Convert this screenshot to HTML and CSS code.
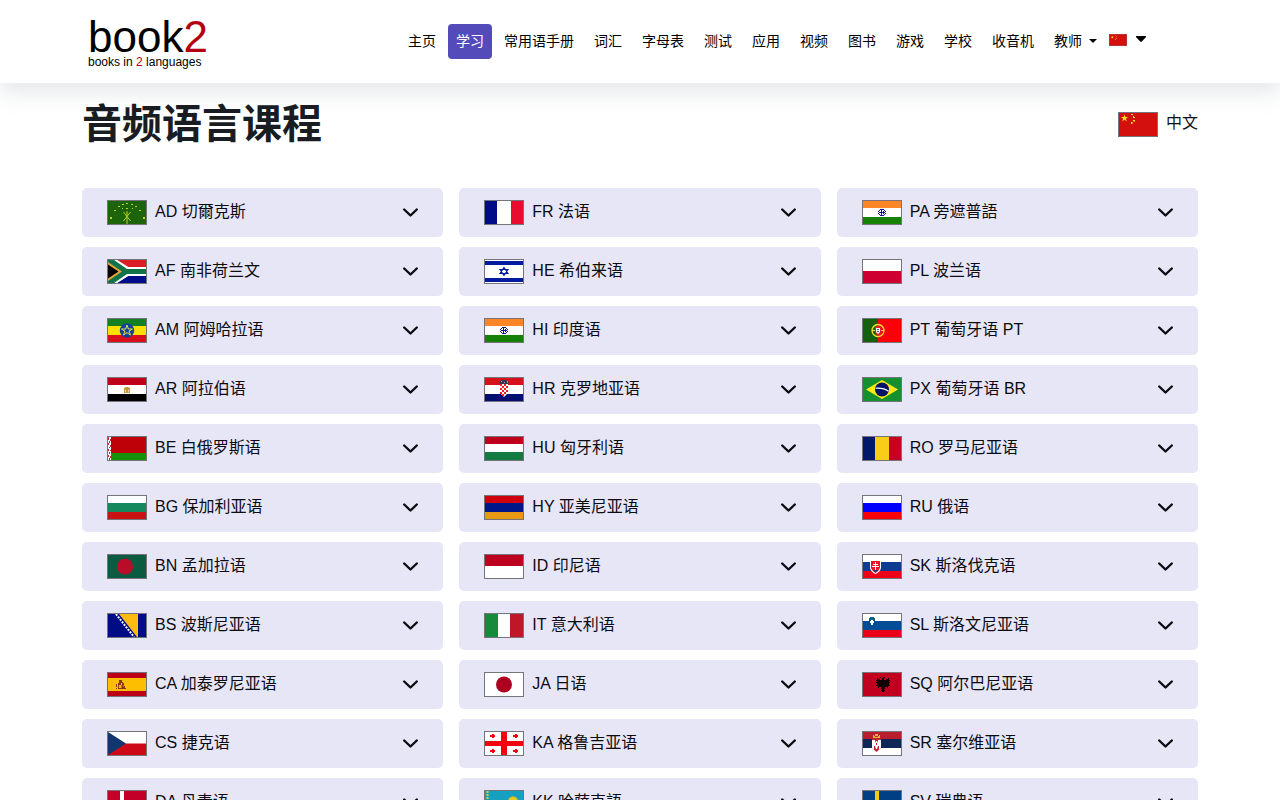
FILE: index.html
```html
<!DOCTYPE html>
<html lang="zh-CN">
<head>
<meta charset="utf-8">
<meta name="viewport" content="width=device-width, initial-scale=1">
<title>音频语言课程</title>
<link rel="stylesheet" href="styles.css">
</head>
<body>
<svg class="defs" aria-hidden="true">
  <symbol id="chevron" viewBox="0 0 16 16"><path d="M2.200 4.500 8.500 10.500 14.800 4.500" fill="none" stroke="currentColor" stroke-width="2.400" stroke-linecap="round" stroke-linejoin="round"/></symbol>
  <symbol id="china" viewBox="0 0 38 23"><path fill="#d4100f" d="M0 0h38v23H0z"/><path fill="#fce01e" d="M5.500 1.500l.9 2.500H9L6.900 5.700l.8 2.600-2.200-1.600-2.200 1.600.8-2.600L2 4h2.600zM12 1h2v1h-2zM14 3h1v2h-1zM15 4h1v1h-1zM14 7h2v1.500h-2zM12 9h1.500v2H12z"/></symbol>
  <symbol id="india" viewBox="0 0 38 23"><path fill="#fff" d="M0 0h38v23H0z"/><path fill="#ff8627" d="M0 0h38v7H0z"/><path fill="#168007" d="M0 16h38v7H0z"/><path fill="#14148c" d="M17 8h4v1h-4zM17 14h4v1h-4zM15 10h1v1h-1zM22 10h1v1h-1zM15 12h1v1h-1zM22 12h1v1h-1zM16 9h1v1h-1zM21 9h1v1h-1zM16 13h1v1h-1zM21 13h1v1h-1zM16 11h6v1h-6zM18 9h1v5h-1zM20 10h1v1h-1zM20 12h1v1h-1z"/></symbol>
</svg>

<header class="topbar">
  <div class="container topbar-inner">
    <a class="logo" href="#" aria-label="book2">
      <span class="logo-name">book<em>2</em></span>
      <span class="logo-tag">books in <em>2</em> languages</span>
    </a>
    <nav class="nav">
      <a href="#">主页</a>
      <a href="#" class="active">学习</a>
      <a href="#">常用语手册</a>
      <a href="#">词汇</a>
      <a href="#">字母表</a>
      <a href="#">测试</a>
      <a href="#">应用</a>
      <a href="#">视频</a>
      <a href="#">图书</a>
      <a href="#">游戏</a>
      <a href="#">学校</a>
      <a href="#">收音机</a>
      <a href="#">教师<svg class="caret" viewBox="0 0 8 4"><path d="M0 0h8L4 4z"/></svg></a>
      <button class="lang-switch" type="button" aria-label="中文"><svg class="flag-small" viewBox="0 0 38 23" preserveAspectRatio="none"><use href="#china"/></svg><svg class="caret-large" viewBox="0 0 12 7"><path d="M1 0h10c1 0 1 1 .6 1.500L7 6.400c-.6.600-1.400.600-2 0L.4 1.500C0 1 0 0 1 0z"/></svg></button>
    </nav>
  </div>
</header>

<main class="container">
  <div class="heading">
    <h1>音频语言课程</h1>
    <div class="current"><svg class="flag" viewBox="0 0 38 23"><use href="#china"/></svg><span class="label">中文</span></div>
  </div>

  <div class="columns">
    <div class="column">
      <button class="course" type="button"><svg class="flag" viewBox="0 0 38 23"><path fill="#1c6309" d="M0 0h38v23H0z"/><path fill="#b5d321" d="M2 16h2v2H2zM35 16h2v2h-2zM6 9h2v1H6zM31 9h2v1h-2zM10 5h2v1h-2zM27 5h2v1h-2zM14 3h2v1h-2zM23 3h2v1h-2zM18 2h2v1h-2zM14 7h1v1h-1zM24 7h1v1h-1zM18 7h2v1h-2z"/><path fill="none" stroke="#b5d321" d="M19 10v13M15.500 11l7 9M22.500 11l-7 9"/></svg><span class="label">AD 切爾克斯</span><svg class="chevron"><use href="#chevron"/></svg></button>
      <button class="course" type="button"><svg class="flag" viewBox="0 0 38 23"><path fill="#fff" d="M0 0h38v23H0z"/><path fill="#d91e25" d="M9 0h29v7H20z"/><path fill="#000c8a" d="M9 23h29v-7H20z"/><path fill="#fff" d="M5 0h4l11 7h18v2H18zM5 23h4l11-7h18v-2H18z"/><path fill="#10734a" d="M0 0h6l13 9h19v5H19L6 23H0z"/><path fill="#e7a03c" d="M0 2l14 9.500L0 21z"/><path d="M0 4.500l10.500 7L0 18.500z"/></svg><span class="label">AF 南非荷兰文</span><svg class="chevron"><use href="#chevron"/></svg></button>
      <button class="course" type="button"><svg class="flag" viewBox="0 0 38 23"><path fill="#fddf00" d="M0 0h38v23H0z"/><path fill="#138022" d="M0 0h38v7H0z"/><path fill="#d9101b" d="M0 16h38v7H0z"/><circle cx="19" cy="11.500" r="7.200" fill="#163e9e"/><path fill="none" stroke="#dedf3f" d="M19 6l3.500 10-9-6h11l-9 6z"/><circle cx="19" cy="11.500" r="2" fill="#163e9e"/></svg><span class="label">AM 阿姆哈拉语</span><svg class="chevron"><use href="#chevron"/></svg></button>
      <button class="course" type="button"><svg class="flag" viewBox="0 0 38 23"><path fill="#fff" d="M0 0h38v23H0z"/><path fill="#c00019" d="M0 0h38v7H0z"/><path d="M0 16h38v7H0z"/><path fill="#c39a37" d="M16 10l2-1h2l2 1v5h-1v-3h-1l1 3h-4l1-3h-1v3h-1z"/></svg><span class="label">AR 阿拉伯语</span><svg class="chevron"><use href="#chevron"/></svg></button>
      <button class="course" type="button"><svg class="flag" viewBox="0 0 38 23"><path fill="#be0008" d="M0 0h38v16H0z"/><path fill="#159008" d="M0 16h38v7H0z"/><path fill="#fff" d="M0 0h3v23H0z"/><path fill="none" stroke="#c1272d" d="M.5 0v3M2.500 2v2M1.500 4v2M.5 6v2M2.500 8v2M1.500 10v1M.5 12v2M2.500 13v1M1.500 15v2M.5 18v2M2.500 19v2M1.500 21v2"/></svg><span class="label">BE 白俄罗斯语</span><svg class="chevron"><use href="#chevron"/></svg></button>
      <button class="course" type="button"><svg class="flag" viewBox="0 0 38 23"><path fill="#fff" d="M0 0h38v7H0z"/><path fill="#16885e" d="M0 7h38v9H0z"/><path fill="#cb1213" d="M0 16h38v7H0z"/></svg><span class="label">BG 保加利亚语</span><svg class="chevron"><use href="#chevron"/></svg></button>
      <button class="course" type="button"><svg class="flag" viewBox="0 0 38 23"><path fill="#0b5b40" d="M0 0h38v23H0z"/><circle cx="17" cy="11.500" r="8" fill="#b90c29"/></svg><span class="label">BN 孟加拉语</span><svg class="chevron"><use href="#chevron"/></svg></button>
      <button class="course" type="button"><svg class="flag" viewBox="0 0 38 23"><path fill="#000c86" d="M0 0h38v23H0z"/><path fill="#fdbb0f" d="M11 0h19v23h-1z"/><path fill="none" stroke="#fff" stroke-width="2" stroke-dasharray="2 1.200" d="M8 0l18 23"/></svg><span class="label">BS 波斯尼亚语</span><svg class="chevron"><use href="#chevron"/></svg></button>
      <button class="course" type="button"><svg class="flag" viewBox="0 0 38 23"><path fill="#fdbd00" d="M0 0h38v23H0z"/><path fill="#bb0018" d="M0 0h38v5H0zM0 18h38v5H0z"/><path fill="#8d3b16" d="M11 7h3v2h1v1h-4zM10 10h3v2h-2v3h3v1h-4zM14 10h2v3h1v3h-3zM8 11h1v3H8zM17 15h1v1h-1zM8 15h1v1H8z"/><path fill="#777586" d="M13 12h1v3h-1zM15 12h1v2h-1z"/></svg><span class="label">CA 加泰罗尼亚语</span><svg class="chevron"><use href="#chevron"/></svg></button>
      <button class="course" type="button"><svg class="flag" viewBox="0 0 38 23"><path fill="#fff" d="M0 0h38v12H0z"/><path fill="#cd0818" d="M0 11.500h38V23H0z"/><path fill="#11356f" d="M0 0l18 11.500L0 23z"/></svg><span class="label">CS 捷克语</span><svg class="chevron"><use href="#chevron"/></svg></button>
      <button class="course" type="button"><svg class="flag" viewBox="0 0 38 23"><path fill="#c20028" d="M0 0h38v23H0z"/><path fill="#fff" d="M12 0h4v23h-4zM0 10h38v4H0z"/></svg><span class="label">DA 丹麦语</span><svg class="chevron"><use href="#chevron"/></svg></button>
    </div>

    <div class="column">
      <button class="course" type="button"><svg class="flag" viewBox="0 0 38 23"><path fill="#000b86" d="M0 0h12v23H0z"/><path fill="#fff" d="M12 0h14v23H12z"/><path fill="#e90c2c" d="M26 0h12v23H26z"/></svg><span class="label">FR 法语</span><svg class="chevron"><use href="#chevron"/></svg></button>
      <button class="course" type="button"><svg class="flag" viewBox="0 0 38 23"><path fill="#fff" d="M0 0h38v23H0z"/><path fill="#001aa0" d="M0 1h38v4H0zM0 18h38v4H0z"/><path fill="none" stroke="#001aa0" stroke-width="1.100" d="M19 7.500l4 6h-8zM19 15.500l4-6h-8z"/></svg><span class="label">HE 希伯来语</span><svg class="chevron"><use href="#chevron"/></svg></button>
      <button class="course" type="button"><svg class="flag" viewBox="0 0 38 23"><use href="#india"/></svg><span class="label">HI 印度语</span><svg class="chevron"><use href="#chevron"/></svg></button>
      <button class="course" type="button"><svg class="flag" viewBox="0 0 38 23"><path fill="#fff" d="M0 0h38v23H0z"/><path fill="#d8101c" d="M0 0h38v7H0z"/><path fill="#000f70" d="M0 16h38v7H0z"/><path fill="#fff" d="M15 6h8v9l-4 4-4-4z"/><path fill="#eb1c24" d="M15 6h2v2h-2zM19 6h2v2h-2zM17 8h2v2h-2zM21 8h2v2h-2zM15 10h2v2h-2zM19 10h2v2h-2zM17 12h2v2h-2zM21 12h2v2h-2zM15 14h2v2h-2zM19 14h2v2h-2zM17 16h2v2h-2z"/><path fill="#30395c" d="M14 4l3-2h4l3 2-1 2h-8z"/><path fill="#c3a266" d="M16 3h1v1h-1zM19 4h1v1h-1zM22 3h1v2h-1z"/></svg><span class="label">HR 克罗地亚语</span><svg class="chevron"><use href="#chevron"/></svg></button>
      <button class="course" type="button"><svg class="flag" viewBox="0 0 38 23"><path fill="#be001d" d="M0 0h38v7H0z"/><path fill="#fff" d="M0 7h38v9H0z"/><path fill="#137a42" d="M0 15h38v8H0z"/></svg><span class="label">HU 匈牙利语</span><svg class="chevron"><use href="#chevron"/></svg></button>
      <button class="course" type="button"><svg class="flag" viewBox="0 0 38 23"><path fill="#ce000b" d="M0 0h38v7H0z"/><path fill="#001689" d="M0 7h38v9H0z"/><path fill="#e89914" d="M0 16h38v7H0z"/></svg><span class="label">HY 亚美尼亚语</span><svg class="chevron"><use href="#chevron"/></svg></button>
      <button class="course" type="button"><svg class="flag" viewBox="0 0 38 23"><path fill="#fff" d="M0 0h38v23H0z"/><path fill="#bd0020" d="M0 0h38v11H0z"/></svg><span class="label">ID 印尼语</span><svg class="chevron"><use href="#chevron"/></svg></button>
      <button class="course" type="button"><svg class="flag" viewBox="0 0 38 23"><path fill="#178b3c" d="M0 0h13v23H0z"/><path fill="#fff" d="M13 0h12v23H13z"/><path fill="#bf1728" d="M25 0h13v23H25z"/></svg><span class="label">IT 意大利语</span><svg class="chevron"><use href="#chevron"/></svg></button>
      <button class="course" type="button"><svg class="flag" viewBox="0 0 38 23"><path fill="#fff" d="M0 0h38v23H0z"/><circle cx="19" cy="11.500" r="8" fill="#ad0021"/></svg><span class="label">JA 日语</span><svg class="chevron"><use href="#chevron"/></svg></button>
      <button class="course" type="button"><svg class="flag" viewBox="0 0 38 23"><path fill="#fff" d="M0 0h38v23H0z"/><path fill="#f5000c" d="M16 0h6v23h-6zM0 9h38v5H0zM7 2h2v1h1v2H9v1H7V5H5V3h2zM30 2h2v1h1v2h-1v1h-2V5h-2V3h2zM7 17h2v1h1v2H9v1H7v-1H5v-2h2zM30 17h2v1h1v2h-1v1h-2v-1h-2v-2h2z"/></svg><span class="label">KA 格鲁吉亚语</span><svg class="chevron"><use href="#chevron"/></svg></button>
      <button class="course" type="button"><svg class="flag" viewBox="0 0 38 23"><path fill="#16a0bf" d="M0 0h38v23H0z"/><path fill="none" stroke="#e5c92c" stroke-width="2" stroke-dasharray="2 1" d="M2.500 0v23"/><circle cx="28" cy="11" r="5" fill="#f5c91b"/><circle cx="28" cy="11" r="5.500" fill="none" stroke="#f5c91b" stroke-dasharray="1 1"/></svg><span class="label">KK 哈萨克語</span><svg class="chevron"><use href="#chevron"/></svg></button>
    </div>

    <div class="column">
      <button class="course" type="button"><svg class="flag" viewBox="0 0 38 23"><use href="#india"/></svg><span class="label">PA 旁遮普語</span><svg class="chevron"><use href="#chevron"/></svg></button>
      <button class="course" type="button"><svg class="flag" viewBox="0 0 38 23"><path fill="#fff" d="M0 0h38v23H0z"/><path fill="#ce0032" d="M0 11h38v12H0z"/></svg><span class="label">PL 波兰语</span><svg class="chevron"><use href="#chevron"/></svg></button>
      <button class="course" type="button"><svg class="flag" viewBox="0 0 38 23"><path fill="#fb0007" d="M0 0h38v23H0z"/><path fill="#15600f" d="M0 0h15v23H0z"/><circle cx="15" cy="11.500" r="6" fill="none" stroke="#f7e52c" stroke-width="1.300"/><path fill="#f7e52c" d="M9 11h12v1H9z"/><path fill="#e81e26" d="M12 7h6v7l-3 3-3-3z"/><path fill="#fff" d="M13 9h4v4l-2 2-2-2z"/><path fill="#43519b" d="M14 10h2v1h-2zM14 12h2v1h-2z"/></svg><span class="label">PT 葡萄牙语 PT</span><svg class="chevron"><use href="#chevron"/></svg></button>
      <button class="course" type="button"><svg class="flag" viewBox="0 0 38 23"><path fill="#15902e" d="M0 0h38v23H0z"/><path fill="#fee915" d="M3 11.500L19 2l16 9.500L19 21z"/><circle cx="19" cy="11.500" r="7" fill="#001169"/><path fill="none" stroke="#fff" stroke-width="1.100" d="M12.500 10.200q8-.7 13 3"/></svg><span class="label">PX 葡萄牙语 BR</span><svg class="chevron"><use href="#chevron"/></svg></button>
      <button class="course" type="button"><svg class="flag" viewBox="0 0 38 23"><path fill="#00196a" d="M0 0h12v23H0z"/><path fill="#f8cc18" d="M12 0h14v23H12z"/><path fill="#c50022" d="M26 0h12v23H26z"/></svg><span class="label">RO 罗马尼亚语</span><svg class="chevron"><use href="#chevron"/></svg></button>
      <button class="course" type="button"><svg class="flag" viewBox="0 0 38 23"><path fill="#fff" d="M0 0h38v7H0z"/><path fill="#0000fc" d="M0 7h38v9H0z"/><path fill="#fa0008" d="M0 16h38v7H0z"/></svg><span class="label">RU 俄语</span><svg class="chevron"><use href="#chevron"/></svg></button>
      <button class="course" type="button"><svg class="flag" viewBox="0 0 38 23"><path fill="#fff" d="M0 0h38v7H0z"/><path fill="#0d3c91" d="M0 7h38v9H0z"/><path fill="#ed0018" d="M0 16h38v7H0z"/><path fill="#fff" d="M7 5h11v8q-1 4-5.500 6Q8 17 7 13z"/><path fill="#ed1429" d="M8 6h9v7q-1 3-4.500 5Q9 16 8 13z"/><path fill="#fff" d="M12 7h1v2h2v1h-2v1h3v1h-3v3h-1v-3H9v-1h3v-1h-2V9h2z"/><path fill="#0d3c91" d="M10 15h5l-2.500 2.500z"/></svg><span class="label">SK 斯洛伐克语</span><svg class="chevron"><use href="#chevron"/></svg></button>
      <button class="course" type="button"><svg class="flag" viewBox="0 0 38 23"><path fill="#fff" d="M0 0h38v7H0z"/><path fill="#004c96" d="M0 7h38v9H0z"/><path fill="#eb001c" d="M0 16h38v7H0z"/><path fill="#145c7c" d="M7 3h4v1h1v3H6V4h1z"/><path fill="#fff" d="M7 7h1V6h2v1h1v2h-1v2H8V9H7z"/></svg><span class="label">SL 斯洛文尼亚语</span><svg class="chevron"><use href="#chevron"/></svg></button>
      <button class="course" type="button"><svg class="flag" viewBox="0 0 38 23"><path fill="#c10020" d="M0 0h38v23H0z"/><path fill="#120306" d="M16 4h2v1h2V4h2v1h-1v2h2V6h2V5h1v2h1v1h-1v1h1v1h-1v2h1v1h-2v2h-1v-1h-2v2h-1v1h1v1h-1v1h-2v-1h-1v-1h1v-1h-1v-2h-2v1h-1v-2h-2v-1h1v-2h-1V9h1V8h-1V7h1V5h1v1h2v1h2V5h-1z"/></svg><span class="label">SQ 阿尔巴尼亚语</span><svg class="chevron"><use href="#chevron"/></svg></button>
      <button class="course" type="button"><svg class="flag" viewBox="0 0 38 23"><path fill="#b91e2f" d="M0 0h38v7H0z"/><path fill="#102657" d="M0 7h38v9H0z"/><path fill="#fff" d="M0 16h38v7H0z"/><path fill="#c2253a" d="M9 7h9v9l-4.500 4L9 16z"/><path fill="#fff" d="M9 8h3v3l1-2h1l1 2V8h3v8l-2 2v-4h-1l-1 3h-1l-1-3h-1v4l-2-2z"/><path fill="#e5b02f" d="M10 3h1v1h1V2h3v2h1V3h1v3h-7z"/><path fill="#c2253a" d="M12 4h3v1h-3zM13 11h1v2h-1z"/></svg><span class="label">SR 塞尔维亚语</span><svg class="chevron"><use href="#chevron"/></svg></button>
      <button class="course" type="button"><svg class="flag" viewBox="0 0 38 23"><path fill="#003f83" d="M0 0h38v23H0z"/><path fill="#f8c914" d="M12 0h4v23h-4zM0 10h38v4H0z"/></svg><span class="label">SV 瑞典语</span><svg class="chevron"><use href="#chevron"/></svg></button>
    </div>
  </div>
</main>
</body>
</html>
```

FILE: styles.css
```css
* {
  box-sizing: border-box;
}

body {
  margin: 0;
  background: #fff;
  color: #111;
  font-family: "Liberation Sans", "Noto Sans CJK SC", sans-serif;
  font-size: 16px;
  line-height: 22px;
}

a {
  color: inherit;
  text-decoration: none;
}

button {
  border: 0;
  background: none;
  color: inherit;
  font: inherit;
  cursor: pointer;
}

.defs {
  position: absolute;
  width: 0;
  height: 0;
}

.container {
  width: 100%;
  max-width: 1140px;
  margin: 0 auto;
  padding: 0 12px;
}

.topbar {
  background: #fff;
  box-shadow: 0 10px 20px rgba(140, 152, 164, 0.22);
}

.topbar-inner {
  display: flex;
  align-items: flex-start;
  justify-content: space-between;
  padding-top: 14px;
  padding-bottom: 15px;
}

.logo {
  display: flex;
  flex-direction: column;
  padding-top: 4px;
  padding-left: 6px;
  color: #000;
}

.logo em {
  color: #b5000f;
  font-style: normal;
}

.logo-name {
  font-size: 44px;
  line-height: 38px;
}

.logo-tag {
  font-size: 12px;
  line-height: 12px;
}

.nav {
  display: flex;
  gap: 4px;
  padding-top: 10px;
  padding-right: 51px;
  color: #000;
  font-size: 14px;
  line-height: 19px;
}

.nav a {
  display: flex;
  align-items: center;
  padding: 8px;
  border-radius: 4px;
  white-space: nowrap;
}

.nav .active {
  background: #544bbb;
  color: #fff;
}

.caret {
  width: 8px;
  height: 4px;
  margin-bottom: 2px;
  margin-left: 7px;
}

.lang-switch {
  display: flex;
  align-items: center;
  gap: 8px;
  height: 32px;
  padding: 0;
}

.flag-small {
  width: 18px;
  height: 12px;
  border: 1px solid #b9352f;
}

.caret-large {
  width: 12px;
  height: 6px;
  margin-bottom: 2px;
}

.heading {
  display: flex;
  align-items: center;
  justify-content: space-between;
  padding: 17px 0 40px;
}

h1 {
  margin: 0;
  color: #191d21;
  font-size: 40px;
  font-weight: 700;
  line-height: 48px;
}

.current {
  display: flex;
  align-items: center;
  gap: 8px;
}

.flag {
  flex: none;
  width: 40px;
  height: 25px;
  border: 1px solid #77737b;
}

.label {
  padding-bottom: 2px;
}

.columns {
  display: grid;
  grid-template-columns: repeat(3, 1fr);
  gap: 16px;
}

.column {
  display: flex;
  flex-direction: column;
  gap: 10px;
}

.course {
  display: flex;
  align-items: center;
  gap: 8px;
  padding: 12px 25px;
  border-radius: 5px;
  background: #e7e6f6;
  color: #0b0b12;
  text-align: left;
}

.chevron {
  width: 16px;
  height: 16px;
  margin-left: auto;
}
```
